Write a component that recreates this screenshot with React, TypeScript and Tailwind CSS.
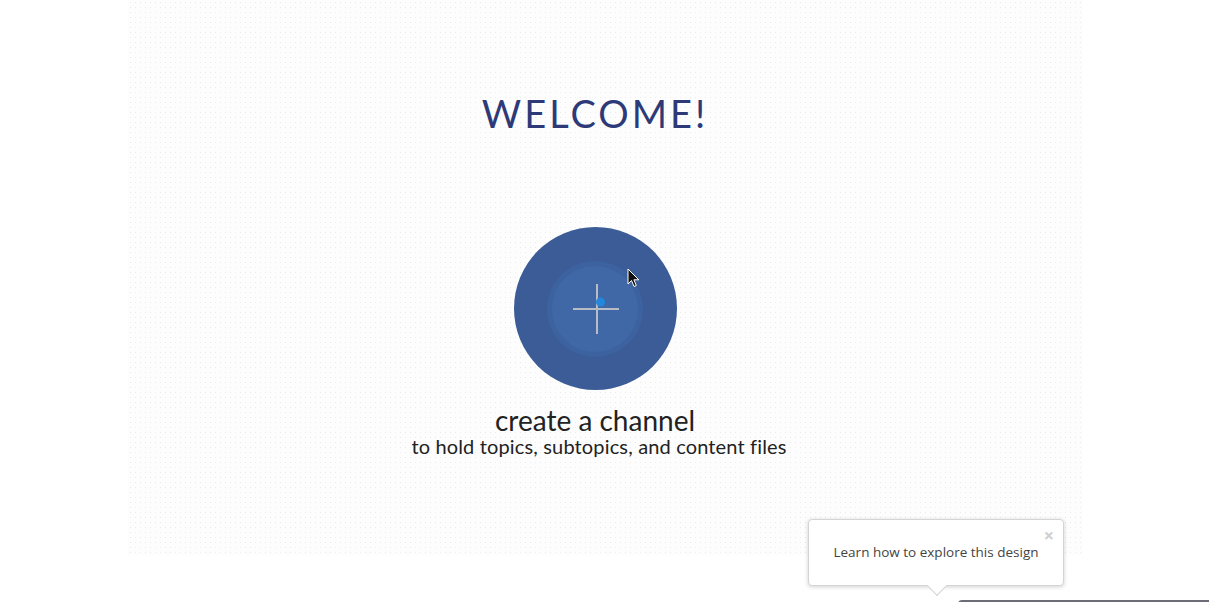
import React from "react";

const Cursor = () => (
  <svg width="13" height="20" viewBox="0 0 13 20" className="absolute left-[627px] top-[268px]">
    <path d="M1 1 L1 16 L4.5 12.5 L7 18.5 L9.3 17.5 L6.9 11.8 L11.8 11.8 Z" fill="#111" stroke="#fff" strokeWidth="1" />
  </svg>
);

const PlusMark = () => (
  <svg width="86" height="86" viewBox="0 0 86 86">
    <rect x="21" y="42" width="46" height="2" fill="#b8bcc4" />
    <rect x="44" y="18" width="2" height="50" fill="#b8bcc4" />
    <circle cx="48.5" cy="36" r="4.5" fill="#2387dc" />
  </svg>
);

const App = () => {
  return (
    <div className="relative w-full h-[602px] bg-white overflow-hidden font-['Lato',sans-serif]">
      <div className="ml-[128px] w-[955px] h-[555px] pr-[21px] flex flex-col items-center bg-[#fdfdfd] bg-[radial-gradient(#ebebeb_0.7px,transparent_0.8px)] bg-[length:5px_5px]">
        <h1 className="mt-[94px] text-[38px] leading-none text-[#2e3a78] tracking-[3px]">WELCOME!</h1>

        <button className="mt-[95px] w-[163px] h-[163px] rounded-full bg-[#3b5c96] flex items-center justify-center">
          <div className="w-[96px] h-[96px] rounded-full bg-[#3d62a0] flex items-center justify-center">
            <div className="w-[86px] h-[86px] rounded-full bg-[#4068a6] flex items-center justify-center">
              <PlusMark />
            </div>
          </div>
        </button>

        <p className="mt-[16px] text-[28px] leading-[28px] text-[#222]">create a channel</p>
        <p className="pl-[8px] text-[20px] leading-[24px] text-[#222] tracking-[0.15px]">to hold topics, subtopics, and content files</p>
      </div>

      <Cursor />

      <div className="absolute left-[808px] top-[519px] w-[256px] h-[67px] bg-white border border-[#d4d4d4] rounded-[4px] shadow-[0_1px_4px_rgba(0,0,0,0.18)] flex items-center justify-center font-['Open_Sans',sans-serif]">
        <span className="text-[13.5px] text-[#444]">Learn how to explore this design</span>
        <span className="absolute right-[9px] top-[2px] text-[18px] font-bold text-[#cfcfcf]">×</span>
        <div className="absolute left-[121px] bottom-[-8px] w-[14px] h-[14px] bg-white border-r border-b border-[#d4d4d4] rotate-45" />
      </div>

      <div className="absolute left-[958px] top-[600px] w-[260px] h-[10px] rounded-l-[4px] bg-[#6c6c76]" />
    </div>
  );
};

export default App;
